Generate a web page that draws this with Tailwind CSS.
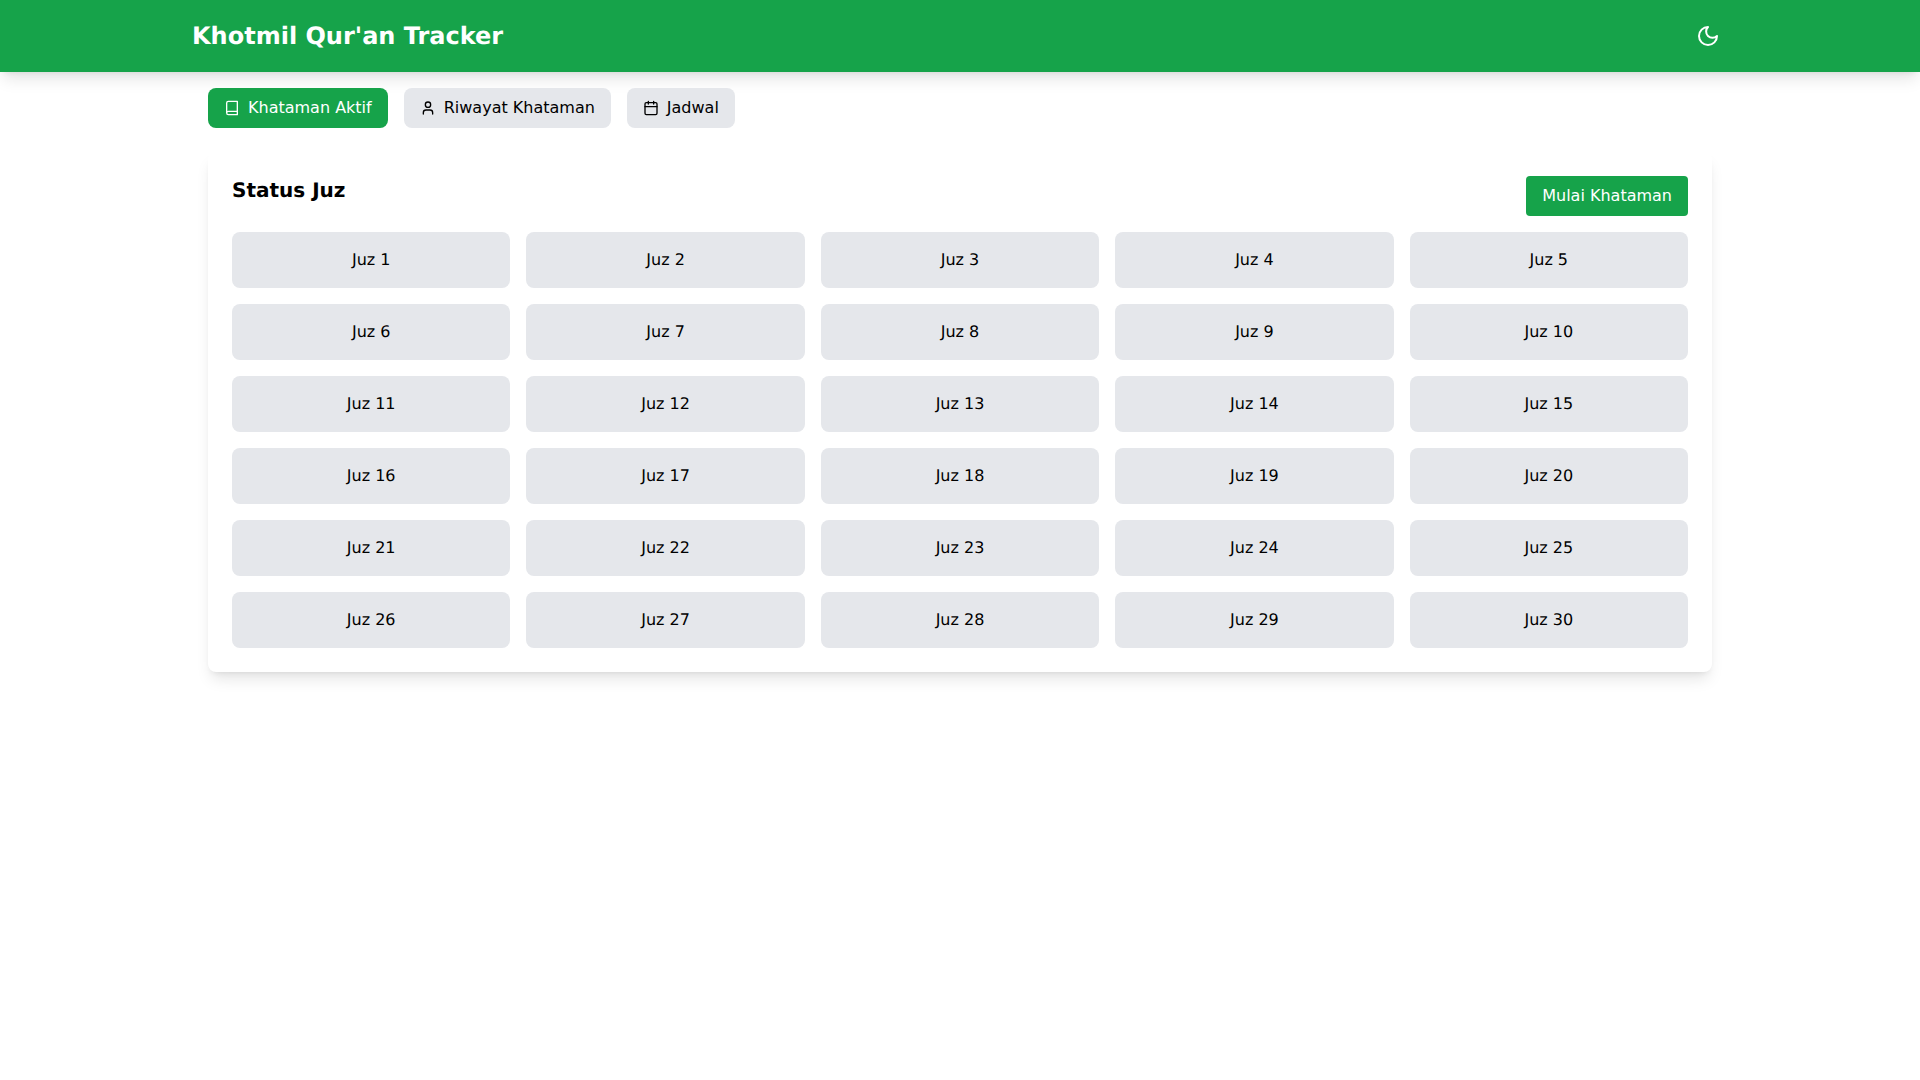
<!DOCTYPE html>
<html lang="en">

<head>
  <meta charset="UTF-8">
  <meta name="viewport" content="width=device-width, initial-scale=1.0">
  <title>Khotmil Qur'an Tracker</title>
  <script src="https://cdn.jsdelivr.net/npm/@tailwindcss/browser@4"></script>
</head>

<body class="min-h-screen bg-white text-black font-['DejaVu_Sans',sans-serif] [text-rendering:geometricPrecision]">

  <header class="bg-[#16a34a] text-white shadow-lg">
    <div class="max-w-[1536px] mx-auto h-[72px] flex justify-between items-center">
      <h1 class="text-2xl font-bold">Khotmil Qur'an Tracker</h1>
      <button class="p-2">
        <svg class="w-6 h-6" viewBox="0 0 24 24" fill="none" stroke="currentColor" stroke-width="2" stroke-linecap="round" stroke-linejoin="round">
          <path d="M12 3a6 6 0 0 0 9 9 9 9 0 1 1-9-9Z" />
        </svg>
      </button>
    </div>
  </header>

  <main class="max-w-[1536px] mx-auto px-4 py-4">
    <nav class="flex gap-4 mb-6">
      <button class="flex items-center h-10 px-4 rounded-lg bg-[#16a34a] text-white">
        <svg class="w-4 h-4 mr-2" viewBox="0 0 24 24" fill="none" stroke="currentColor" stroke-width="2" stroke-linecap="round" stroke-linejoin="round">
          <path d="M4 19.5v-15A2.5 2.5 0 0 1 6.5 2H20v20H6.5a2.5 2.5 0 0 1 0-5H20" />
        </svg>
        Khataman Aktif
      </button>
      <button class="flex items-center h-10 px-4 rounded-lg bg-[#e5e7eb]">
        <svg class="w-4 h-4 mr-2" viewBox="0 0 24 24" fill="none" stroke="currentColor" stroke-width="2" stroke-linecap="round" stroke-linejoin="round">
          <path d="M19 21v-2a4 4 0 0 0-4-4H9a4 4 0 0 0-4 4v2" />
          <circle cx="12" cy="7" r="4" />
        </svg>
        Riwayat Khataman
      </button>
      <button class="flex items-center h-10 px-4 rounded-lg bg-[#e5e7eb]">
        <svg class="w-4 h-4 mr-2" viewBox="0 0 24 24" fill="none" stroke="currentColor" stroke-width="2" stroke-linecap="round" stroke-linejoin="round">
          <rect x="3" y="4" width="18" height="18" rx="2" />
          <path d="M16 2v4M8 2v4M3 10h18" />
        </svg>
        Jadwal
      </button>
    </nav>

    <section class="bg-white rounded-lg shadow-lg p-6">
      <div class="flex justify-between items-start mb-4">
        <h2 class="text-xl font-bold">Status Juz</h2>
        <button class="h-10 px-4 rounded bg-[#16a34a] text-white">Mulai Khataman</button>
      </div>
      <div id="juz-grid" class="grid grid-cols-5 gap-4"></div>
    </section>
  </main>

  <script>
    const grid = document.getElementById('juz-grid');
    for (let i = 1; i <= 30; i++) {
      const cell = document.createElement('div');
      cell.className = "h-14 flex items-center justify-center rounded-lg bg-[#e5e7eb]";
      cell.textContent = `Juz ${i}`;
      grid.appendChild(cell);
    }
  </script>

</body>

</html>
